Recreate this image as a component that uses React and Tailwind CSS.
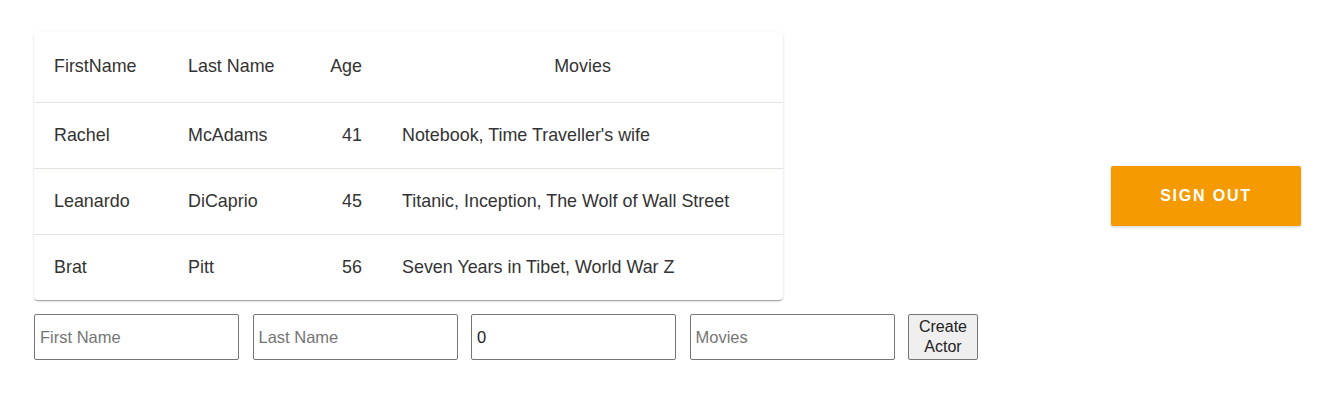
const actors = [
  { first: 'Rachel', last: 'McAdams', age: 41, movies: "Notebook, Time Traveller's wife" },
  { first: 'Leanardo', last: 'DiCaprio', age: 45, movies: 'Titanic, Inception, The Wolf of Wall Street' },
  { first: 'Brat', last: 'Pitt', age: 56, movies: 'Seven Years in Tibet, World War Z' },
]

function ActorTable() {
  return (
    <div className="w-[749px] rounded-[4px] bg-white shadow-[0_2px_1px_-1px_rgba(0,0,0,0.2),0_1px_1px_0_rgba(0,0,0,0.14),0_1px_3px_0_rgba(0,0,0,0.12)]">
      <table className="w-full table-fixed border-collapse text-[17.9px] text-[#333]">
        <colgroup>
          <col className="w-[134px]" />
          <col className="w-[134px]" />
          <col className="w-[80px]" />
          <col />
        </colgroup>
        <thead>
          <tr className="h-[70px] border-b border-[#e4e4df]">
            <th className="px-5 text-left font-normal">FirstName</th>
            <th className="px-5 text-left font-normal">Last Name</th>
            <th className="px-5 text-right font-normal">Age</th>
            <th className="px-5 text-center font-normal">Movies</th>
          </tr>
        </thead>
        <tbody>
          {actors.map((a, i) => (
            <tr key={a.first} className={i < actors.length - 1 ? 'h-[66px] border-b border-[#e4e4df]' : 'h-[66px]'}>
              <td className="px-5">{a.first}</td>
              <td className="px-5">{a.last}</td>
              <td className="px-5 text-right">{a.age}</td>
              <td className="px-5">{a.movies}</td>
            </tr>
          ))}
        </tbody>
      </table>
    </div>
  )
}

function CreateForm() {
  const field = 'h-[46px] w-[205px] rounded-[2px] border border-[#767676] bg-white px-[5px] text-[16.5px] text-[#222] placeholder:text-[#757575] outline-none'
  return (
    <div className="mt-[14px] flex items-start gap-[13.5px]">
      <input className={field} placeholder="First Name" />
      <input className={field} placeholder="Last Name" />
      <input className={field} defaultValue="0" />
      <input className={field} placeholder="Movies" />
      <button className="h-[46px] w-[70px] rounded-[2px] border border-[#767676] bg-[#efefef] text-[16px] leading-[20px] text-[#222]">
        Create Actor
      </button>
    </div>
  )
}

export default function App() {
  return (
    <div className="flex min-h-[403px] items-center justify-between bg-white pl-[34px] pr-[23px] pt-[32px] pb-[43px] font-['Liberation_Sans',Arial,sans-serif]">
      <div className="flex flex-col">
        <ActorTable />
        <CreateForm />
      </div>
      <button className="h-[60px] w-[190px] rounded-[2px] bg-[#f59a00] text-[16px] font-bold uppercase tracking-[1.8px] text-white shadow-[0_1px_3px_rgba(0,0,0,0.2)]">
        Sign out
      </button>
    </div>
  )
}
